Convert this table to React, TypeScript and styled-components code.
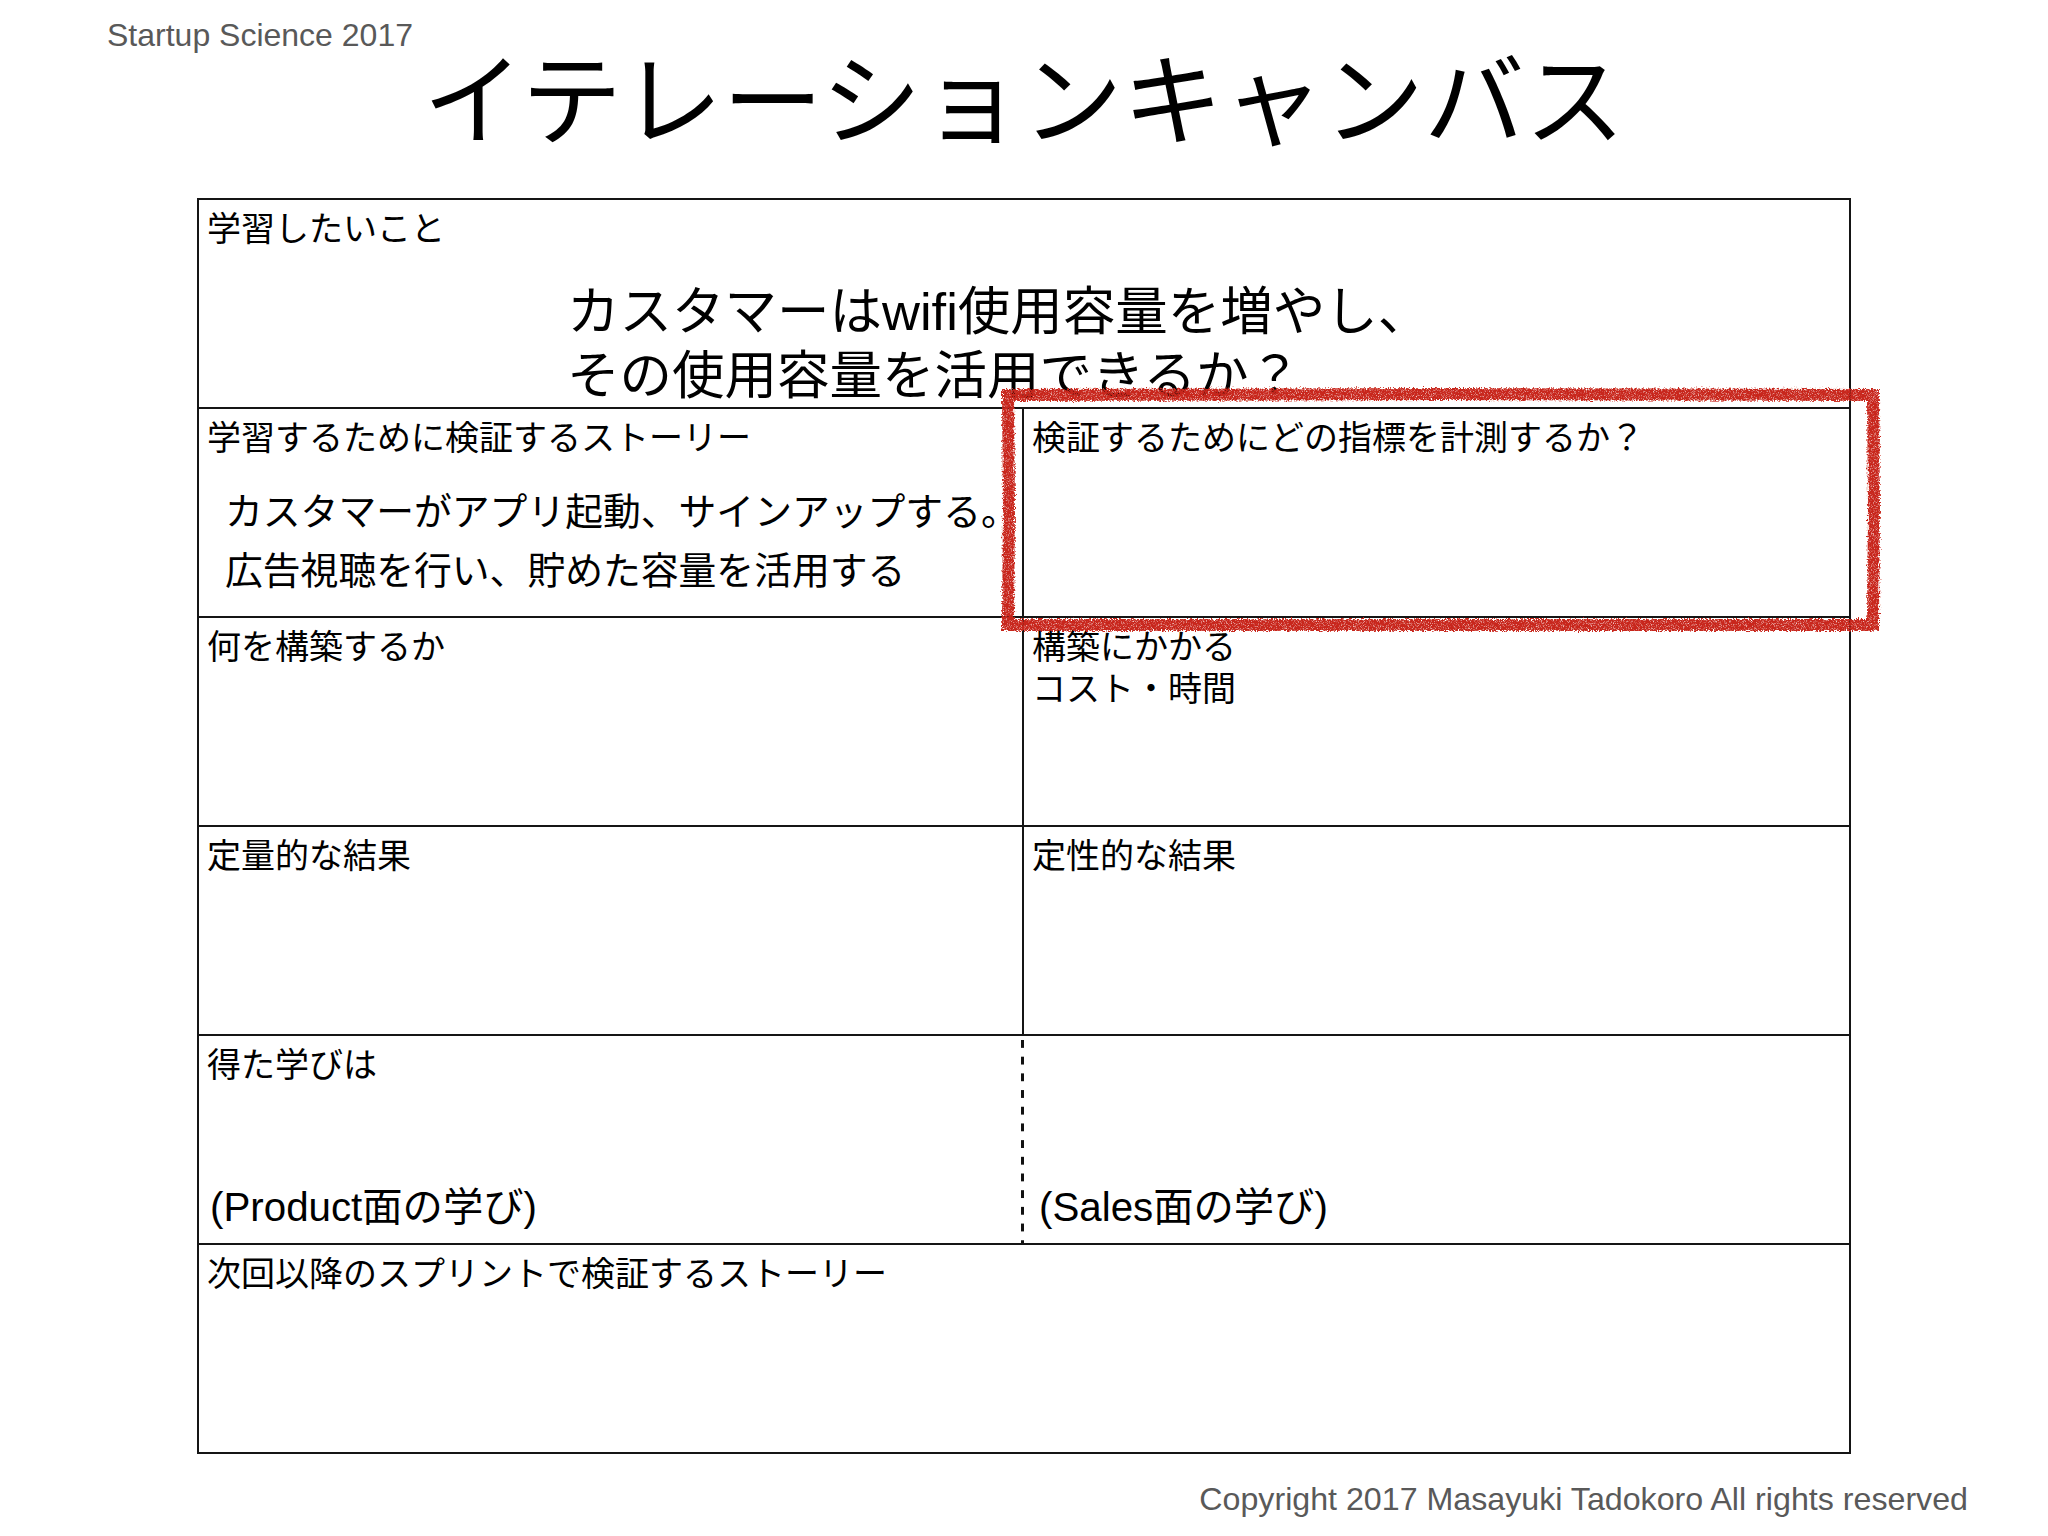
import React from 'react';
import styled, { createGlobalStyle } from 'styled-components';

const GlobalStyle = createGlobalStyle`
  html, body {
    margin: 0;
    padding: 0;
    background: #ffffff;
  }
  body {
    font-family: "Liberation Sans", "Noto Sans CJK JP", sans-serif;
  }
`;

const LINE = '#151515';

const Page = styled.div`
  position: relative;
  width: 2048px;
  height: 1536px;
  overflow: hidden;
  background: #ffffff;
  color: #000000;
  font-family: "Liberation Sans", "Noto Sans CJK JP", sans-serif;
`;

const Kicker = styled.div`
  padding: 19px 0 0 107px;
  font-size: 32px;
  line-height: 32px;
  color: #595959;
`;

const Title = styled.h1`
  margin: 1.5px 0 0;
  text-align: center;
  font-family: "Noto Sans CJK JP", sans-serif;
  font-weight: 400;
  font-size: 100.5px;
  line-height: 80px;
  color: #000000;
`;

const Canvas = styled.section`
  width: 1654px;
  margin: 65.5px auto 0;
  box-sizing: border-box;
  border: 2px solid ${LINE};
  border-top: none;
`;

const Row = styled.div<{ $split?: boolean }>`
  display: grid;
  grid-template-columns: ${(p) => (p.$split ? '1fr 1fr' : '1fr')};
  height: 209px;
  box-sizing: border-box;
  border-top: 2px solid ${LINE};
`;

type Divider = 'none' | 'solid' | 'dashed';

const Cell = styled.div<{ $divider?: Divider }>`
  display: flex;
  flex-direction: column;
  min-width: 0;
  box-sizing: border-box;
  padding: 8px 8px 0;
  border-right: ${(p) => (p.$divider === 'solid' ? `2px solid ${LINE}` : 'none')};
  background: ${(p) =>
    p.$divider === 'dashed'
      ? `linear-gradient(#111 0 8px, transparent 8px 100%) right 4px / 3.5px 16.7px repeat-y`
      : 'transparent'};
`;

const Label = styled.div`
  font-size: 34px;
  line-height: 42px;
  white-space: pre-line;
  color: #000000;
`;

const Hypothesis = styled.div`
  margin: 30px 0 0 360px;
  font-size: 52.5px;
  line-height: 64px;
  white-space: nowrap;
`;

const Story = styled.div`
  margin: 24px 0 0 18px;
  font-size: 37.8px;
  line-height: 59px;
  white-space: nowrap;
`;

const Learning = styled.div<{ $indent?: number }>`
  margin: auto 0 11px ${(p) => p.$indent ?? 3}px;
  font-size: 40.3px;
  line-height: 48px;
  white-space: nowrap;
`;

const Footer = styled.footer`
  margin-top: 25px;
  padding-right: 80px;
  text-align: right;
  font-size: 32.2px;
  line-height: 40px;
  color: #595959;
`;

const Mark = styled.svg`
  position: absolute;
  left: 1003px;
  top: 388px;
  overflow: visible;
  pointer-events: none;
`;

function RedMark() {
  return (
    <Mark width="877" height="244" viewBox="0 0 877 244" aria-hidden="true">
      <defs>
        <filter id="crayon" x="-5%" y="-15%" width="110%" height="130%">
          <feTurbulence type="fractalNoise" baseFrequency="0.6" numOctaves="3" seed="4" result="noise" />
          <feDisplacementMap
            in="SourceGraphic"
            in2="noise"
            scale="6"
            xChannelSelector="R"
            yChannelSelector="G"
            result="disp"
          />
          <feTurbulence type="fractalNoise" baseFrequency="1.4" numOctaves="1" seed="9" result="grain" />
          <feColorMatrix
            in="grain"
            type="matrix"
            values="0 0 0 0 0  0 0 0 0 0  0 0 0 0 0  0 0 0 -2.4 2.2"
            result="mask"
          />
          <feComposite in="disp" in2="mask" operator="in" />
        </filter>
      </defs>
      <path
        d="M5 7 L440 6 L870 7 L871 120 L870 237 L440 237 L5 237 L6 120 Z"
        fill="none"
        stroke="#c8261a"
        strokeWidth="12"
        strokeLinejoin="miter"
        filter="url(#crayon)"
      />
    </Mark>
  );
}

export default function App() {
  return (
    <>
      <GlobalStyle />
      <Page>
        <Kicker>Startup Science 2017</Kicker>
        <Title>イテレーションキャンバス</Title>
        <Canvas>
          <Row>
            <Cell>
              <Label>学習したいこと</Label>
              <Hypothesis>
                カスタマーはwifi使用容量を増やし、
                <br />
                その使用容量を活用できるか？
              </Hypothesis>
            </Cell>
          </Row>
          <Row $split>
            <Cell $divider="solid">
              <Label>学習するために検証するストーリー</Label>
              <Story>
                カスタマーがアプリ起動、サインアップする。
                <br />
                広告視聴を行い、貯めた容量を活用する
              </Story>
            </Cell>
            <Cell>
              <Label>検証するためにどの指標を計測するか？</Label>
            </Cell>
          </Row>
          <Row $split>
            <Cell $divider="solid">
              <Label>何を構築するか</Label>
            </Cell>
            <Cell>
              <Label>{'構築にかかる\nコスト・時間'}</Label>
            </Cell>
          </Row>
          <Row $split>
            <Cell $divider="solid">
              <Label>定量的な結果</Label>
            </Cell>
            <Cell>
              <Label>定性的な結果</Label>
            </Cell>
          </Row>
          <Row $split>
            <Cell $divider="dashed">
              <Label>得た学びは</Label>
              <Learning $indent={3}>(Product面の学び)</Learning>
            </Cell>
            <Cell>
              <Learning $indent={7}>(Sales面の学び)</Learning>
            </Cell>
          </Row>
          <Row>
            <Cell>
              <Label>次回以降のスプリントで検証するストーリー</Label>
            </Cell>
          </Row>
        </Canvas>
        <Footer>Copyright 2017 Masayuki Tadokoro All rights reserved</Footer>
        <RedMark />
      </Page>
    </>
  );
}
